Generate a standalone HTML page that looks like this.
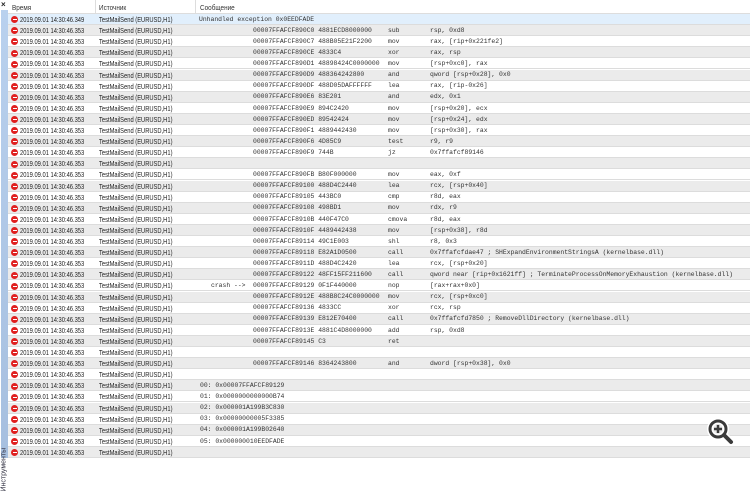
<!DOCTYPE html>
<html><head><meta charset="utf-8"><style>
*{margin:0;padding:0;box-sizing:border-box}
body{width:750px;height:458px;overflow:hidden;background:#fff;position:relative;font-family:"Liberation Sans","Noto Sans CJK SC",sans-serif;font-size:8px;color:#222}
.strip{position:absolute;left:1px;top:10px;width:7px;height:448px;background:linear-gradient(#b9d1ee,#a6bfdf);}
.x{position:absolute;left:1px;top:0;font-size:8px;font-weight:bold;line-height:9px}
.vt{position:absolute;left:0;top:418px;width:8px;height:60px;overflow:visible}
.vt span{position:absolute;left:-26px;top:40px;width:60px;transform:rotate(-90deg);font-size:7px;color:#334;white-space:nowrap;text-align:left}
.hdr{position:absolute;left:8px;top:0;width:742px;height:14px;border-bottom:1px solid #ddd;background:#fff}
.hdr div{position:absolute;top:3px;font-size:7.5px;color:#333;transform:scaleX(.85);transform-origin:left}
.sep{position:absolute;top:0;width:1px;height:14px;background:#ddd}
.row{position:absolute;left:8px;width:742px;height:11.1px;border-bottom:1px solid #dcdcdc;white-space:nowrap}
.g{background:#ebebeb}.w{background:#fff}.s{background:#e1effc}
.row .m{position:absolute;left:188px;top:0;width:554px;height:100%;background:inherit}
.row.g .m{background:#ebebeb}.row.w .m{background:#fff}
.ic{position:absolute;left:3px;top:2.3px;width:7px;height:7px;border-radius:50%;background:#e02020}
.ic:after{content:"";position:absolute;left:1.5px;top:3px;width:4px;height:1px;background:#fff}
.t,.src{position:absolute;top:1px;font-size:7.5px;transform:scaleX(.77);transform-origin:left}
.t{left:12px}.src{left:91px}
.mo{position:absolute;top:1.8px;font-family:"Liberation Mono",monospace;font-size:6.4px;color:#333}
</style></head><body>
<div class="x">×</div>
<div class="strip"></div>
<div class="vt"><span>Инструменты</span></div>
<div class="hdr"><div style="left:4px">Время</div><div style="left:91px">Источник</div><div style="left:192px">Сообщение</div>
<span class="sep" style="left:87px"></span><span class="sep" style="left:187px"></span></div>
<div id="rows">
<div class="row s" style="top:14.0px"><i class="ic"></i><span class="t">2019.09.01 14:30:46.349</span><span class="src">TestMailSend (EURUSD,H1)</span><span class="mo" style="left:191px">Unhandled exception 0x0EEDFADE</span></div>
<div class="row g" style="top:25.1px"><div class="m"></div><i class="ic"></i><span class="t">2019.09.01 14:30:46.353</span><span class="src">TestMailSend (EURUSD,H1)</span><span class="mo" style="left:245px">00007FFAFCF890C0 4881ECD8000000</span><span class="mo" style="left:380px">sub</span><span class="mo" style="left:422px">rsp, 0xd8</span></div>
<div class="row w" style="top:36.2px"><div class="m"></div><i class="ic"></i><span class="t">2019.09.01 14:30:46.353</span><span class="src">TestMailSend (EURUSD,H1)</span><span class="mo" style="left:245px">00007FFAFCF890C7 488B05E21F2200</span><span class="mo" style="left:380px">mov</span><span class="mo" style="left:422px">rax, [rip+0x221fe2]</span></div>
<div class="row g" style="top:47.3px"><div class="m"></div><i class="ic"></i><span class="t">2019.09.01 14:30:46.353</span><span class="src">TestMailSend (EURUSD,H1)</span><span class="mo" style="left:245px">00007FFAFCF890CE 4833C4</span><span class="mo" style="left:380px">xor</span><span class="mo" style="left:422px">rax, rsp</span></div>
<div class="row w" style="top:58.4px"><div class="m"></div><i class="ic"></i><span class="t">2019.09.01 14:30:46.353</span><span class="src">TestMailSend (EURUSD,H1)</span><span class="mo" style="left:245px">00007FFAFCF890D1 48898424C0000000</span><span class="mo" style="left:380px">mov</span><span class="mo" style="left:422px">[rsp+0xc0], rax</span></div>
<div class="row g" style="top:69.5px"><div class="m"></div><i class="ic"></i><span class="t">2019.09.01 14:30:46.353</span><span class="src">TestMailSend (EURUSD,H1)</span><span class="mo" style="left:245px">00007FFAFCF890D9 488364242800</span><span class="mo" style="left:380px">and</span><span class="mo" style="left:422px">qword [rsp+0x28], 0x0</span></div>
<div class="row w" style="top:80.6px"><div class="m"></div><i class="ic"></i><span class="t">2019.09.01 14:30:46.353</span><span class="src">TestMailSend (EURUSD,H1)</span><span class="mo" style="left:245px">00007FFAFCF890DF 488D05DAFFFFFF</span><span class="mo" style="left:380px">lea</span><span class="mo" style="left:422px">rax, [rip-0x26]</span></div>
<div class="row g" style="top:91.7px"><div class="m"></div><i class="ic"></i><span class="t">2019.09.01 14:30:46.353</span><span class="src">TestMailSend (EURUSD,H1)</span><span class="mo" style="left:245px">00007FFAFCF890E6 83E201</span><span class="mo" style="left:380px">and</span><span class="mo" style="left:422px">edx, 0x1</span></div>
<div class="row w" style="top:102.8px"><div class="m"></div><i class="ic"></i><span class="t">2019.09.01 14:30:46.353</span><span class="src">TestMailSend (EURUSD,H1)</span><span class="mo" style="left:245px">00007FFAFCF890E9 894C2420</span><span class="mo" style="left:380px">mov</span><span class="mo" style="left:422px">[rsp+0x20], ecx</span></div>
<div class="row g" style="top:113.9px"><div class="m"></div><i class="ic"></i><span class="t">2019.09.01 14:30:46.353</span><span class="src">TestMailSend (EURUSD,H1)</span><span class="mo" style="left:245px">00007FFAFCF890ED 89542424</span><span class="mo" style="left:380px">mov</span><span class="mo" style="left:422px">[rsp+0x24], edx</span></div>
<div class="row w" style="top:125.0px"><div class="m"></div><i class="ic"></i><span class="t">2019.09.01 14:30:46.353</span><span class="src">TestMailSend (EURUSD,H1)</span><span class="mo" style="left:245px">00007FFAFCF890F1 4889442430</span><span class="mo" style="left:380px">mov</span><span class="mo" style="left:422px">[rsp+0x30], rax</span></div>
<div class="row g" style="top:136.1px"><div class="m"></div><i class="ic"></i><span class="t">2019.09.01 14:30:46.353</span><span class="src">TestMailSend (EURUSD,H1)</span><span class="mo" style="left:245px">00007FFAFCF890F6 4D85C9</span><span class="mo" style="left:380px">test</span><span class="mo" style="left:422px">r9, r9</span></div>
<div class="row w" style="top:147.2px"><div class="m"></div><i class="ic"></i><span class="t">2019.09.01 14:30:46.353</span><span class="src">TestMailSend (EURUSD,H1)</span><span class="mo" style="left:245px">00007FFAFCF890F9 744B</span><span class="mo" style="left:380px">jz</span><span class="mo" style="left:422px">0x7ffafcf89146</span></div>
<div class="row g" style="top:158.3px"><div class="m"></div><i class="ic"></i><span class="t">2019.09.01 14:30:46.353</span><span class="src">TestMailSend (EURUSD,H1)</span></div>
<div class="row w" style="top:169.4px"><div class="m"></div><i class="ic"></i><span class="t">2019.09.01 14:30:46.353</span><span class="src">TestMailSend (EURUSD,H1)</span><span class="mo" style="left:245px">00007FFAFCF890FB B80F000000</span><span class="mo" style="left:380px">mov</span><span class="mo" style="left:422px">eax, 0xf</span></div>
<div class="row g" style="top:180.5px"><div class="m"></div><i class="ic"></i><span class="t">2019.09.01 14:30:46.353</span><span class="src">TestMailSend (EURUSD,H1)</span><span class="mo" style="left:245px">00007FFAFCF89100 488D4C2440</span><span class="mo" style="left:380px">lea</span><span class="mo" style="left:422px">rcx, [rsp+0x40]</span></div>
<div class="row w" style="top:191.6px"><div class="m"></div><i class="ic"></i><span class="t">2019.09.01 14:30:46.353</span><span class="src">TestMailSend (EURUSD,H1)</span><span class="mo" style="left:245px">00007FFAFCF89105 443BC0</span><span class="mo" style="left:380px">cmp</span><span class="mo" style="left:422px">r8d, eax</span></div>
<div class="row g" style="top:202.7px"><div class="m"></div><i class="ic"></i><span class="t">2019.09.01 14:30:46.353</span><span class="src">TestMailSend (EURUSD,H1)</span><span class="mo" style="left:245px">00007FFAFCF89108 498BD1</span><span class="mo" style="left:380px">mov</span><span class="mo" style="left:422px">rdx, r9</span></div>
<div class="row w" style="top:213.8px"><div class="m"></div><i class="ic"></i><span class="t">2019.09.01 14:30:46.353</span><span class="src">TestMailSend (EURUSD,H1)</span><span class="mo" style="left:245px">00007FFAFCF8910B 440F47C0</span><span class="mo" style="left:380px">cmova</span><span class="mo" style="left:422px">r8d, eax</span></div>
<div class="row g" style="top:224.9px"><div class="m"></div><i class="ic"></i><span class="t">2019.09.01 14:30:46.353</span><span class="src">TestMailSend (EURUSD,H1)</span><span class="mo" style="left:245px">00007FFAFCF8910F 4489442438</span><span class="mo" style="left:380px">mov</span><span class="mo" style="left:422px">[rsp+0x38], r8d</span></div>
<div class="row w" style="top:236.0px"><div class="m"></div><i class="ic"></i><span class="t">2019.09.01 14:30:46.353</span><span class="src">TestMailSend (EURUSD,H1)</span><span class="mo" style="left:245px">00007FFAFCF89114 49C1E003</span><span class="mo" style="left:380px">shl</span><span class="mo" style="left:422px">r8, 0x3</span></div>
<div class="row g" style="top:247.1px"><div class="m"></div><i class="ic"></i><span class="t">2019.09.01 14:30:46.353</span><span class="src">TestMailSend (EURUSD,H1)</span><span class="mo" style="left:245px">00007FFAFCF89118 E82A1D0500</span><span class="mo" style="left:380px">call</span><span class="mo" style="left:422px">0x7ffafcfdae47  ; SHExpandEnvironmentStringsA (kernelbase.dll)</span></div>
<div class="row w" style="top:258.2px"><div class="m"></div><i class="ic"></i><span class="t">2019.09.01 14:30:46.353</span><span class="src">TestMailSend (EURUSD,H1)</span><span class="mo" style="left:245px">00007FFAFCF8911D 488D4C2420</span><span class="mo" style="left:380px">lea</span><span class="mo" style="left:422px">rcx, [rsp+0x20]</span></div>
<div class="row g" style="top:269.3px"><div class="m"></div><i class="ic"></i><span class="t">2019.09.01 14:30:46.353</span><span class="src">TestMailSend (EURUSD,H1)</span><span class="mo" style="left:245px">00007FFAFCF89122 48FF15FF211600</span><span class="mo" style="left:380px">call</span><span class="mo" style="left:422px">qword near [rip+0x1621ff]  ; TerminateProcessOnMemoryExhaustion (kernelbase.dll)</span></div>
<div class="row w" style="top:280.4px"><div class="m"></div><i class="ic"></i><span class="t">2019.09.01 14:30:46.353</span><span class="src">TestMailSend (EURUSD,H1)</span><span class="mo" style="left:203px">crash --&gt;</span><span class="mo" style="left:245px">00007FFAFCF89129 0F1F440000</span><span class="mo" style="left:380px">nop</span><span class="mo" style="left:422px">[rax+rax+0x0]</span></div>
<div class="row g" style="top:291.5px"><div class="m"></div><i class="ic"></i><span class="t">2019.09.01 14:30:46.353</span><span class="src">TestMailSend (EURUSD,H1)</span><span class="mo" style="left:245px">00007FFAFCF8912E 488B8C24C0000000</span><span class="mo" style="left:380px">mov</span><span class="mo" style="left:422px">rcx, [rsp+0xc0]</span></div>
<div class="row w" style="top:302.6px"><div class="m"></div><i class="ic"></i><span class="t">2019.09.01 14:30:46.353</span><span class="src">TestMailSend (EURUSD,H1)</span><span class="mo" style="left:245px">00007FFAFCF89136 4833CC</span><span class="mo" style="left:380px">xor</span><span class="mo" style="left:422px">rcx, rsp</span></div>
<div class="row g" style="top:313.7px"><div class="m"></div><i class="ic"></i><span class="t">2019.09.01 14:30:46.353</span><span class="src">TestMailSend (EURUSD,H1)</span><span class="mo" style="left:245px">00007FFAFCF89139 E812E70400</span><span class="mo" style="left:380px">call</span><span class="mo" style="left:422px">0x7ffafcfd7850  ; RemoveDllDirectory (kernelbase.dll)</span></div>
<div class="row w" style="top:324.8px"><div class="m"></div><i class="ic"></i><span class="t">2019.09.01 14:30:46.353</span><span class="src">TestMailSend (EURUSD,H1)</span><span class="mo" style="left:245px">00007FFAFCF8913E 4881C4D8000000</span><span class="mo" style="left:380px">add</span><span class="mo" style="left:422px">rsp, 0xd8</span></div>
<div class="row g" style="top:335.9px"><div class="m"></div><i class="ic"></i><span class="t">2019.09.01 14:30:46.353</span><span class="src">TestMailSend (EURUSD,H1)</span><span class="mo" style="left:245px">00007FFAFCF89145 C3</span><span class="mo" style="left:380px">ret</span></div>
<div class="row w" style="top:347.0px"><div class="m"></div><i class="ic"></i><span class="t">2019.09.01 14:30:46.353</span><span class="src">TestMailSend (EURUSD,H1)</span></div>
<div class="row g" style="top:358.1px"><div class="m"></div><i class="ic"></i><span class="t">2019.09.01 14:30:46.353</span><span class="src">TestMailSend (EURUSD,H1)</span><span class="mo" style="left:245px">00007FFAFCF89146 8364243800</span><span class="mo" style="left:380px">and</span><span class="mo" style="left:422px">dword [rsp+0x38], 0x0</span></div>
<div class="row w" style="top:369.2px"><div class="m"></div><i class="ic"></i><span class="t">2019.09.01 14:30:46.353</span><span class="src">TestMailSend (EURUSD,H1)</span></div>
<div class="row g" style="top:380.3px"><div class="m"></div><i class="ic"></i><span class="t">2019.09.01 14:30:46.353</span><span class="src">TestMailSend (EURUSD,H1)</span><span class="mo" style="left:192px">00: 0x00007FFAFCF89129</span></div>
<div class="row w" style="top:391.4px"><div class="m"></div><i class="ic"></i><span class="t">2019.09.01 14:30:46.353</span><span class="src">TestMailSend (EURUSD,H1)</span><span class="mo" style="left:192px">01: 0x0000000000000B74</span></div>
<div class="row g" style="top:402.5px"><div class="m"></div><i class="ic"></i><span class="t">2019.09.01 14:30:46.353</span><span class="src">TestMailSend (EURUSD,H1)</span><span class="mo" style="left:192px">02: 0x000001A199B3C830</span></div>
<div class="row w" style="top:413.6px"><div class="m"></div><i class="ic"></i><span class="t">2019.09.01 14:30:46.353</span><span class="src">TestMailSend (EURUSD,H1)</span><span class="mo" style="left:192px">03: 0x00000000005F3385</span></div>
<div class="row g" style="top:424.7px"><div class="m"></div><i class="ic"></i><span class="t">2019.09.01 14:30:46.353</span><span class="src">TestMailSend (EURUSD,H1)</span><span class="mo" style="left:192px">04: 0x000001A199B02640</span></div>
<div class="row w" style="top:435.8px"><div class="m"></div><i class="ic"></i><span class="t">2019.09.01 14:30:46.353</span><span class="src">TestMailSend (EURUSD,H1)</span><span class="mo" style="left:192px">05: 0x000000010EEDFADE</span></div>
<div class="row g" style="top:446.9px"><div class="m"></div><i class="ic"></i><span class="t">2019.09.01 14:30:46.353</span><span class="src">TestMailSend (EURUSD,H1)</span></div>
</div>
<svg style="position:absolute;left:706px;top:418px" width="32" height="30" viewBox="0 0 32 30">
<circle cx="12" cy="11" r="8" fill="none" stroke="#fff" stroke-width="6"/>
<line x1="18" y1="17" x2="25" y2="24" stroke="#fff" stroke-width="7" stroke-linecap="round"/>
<circle cx="12" cy="11" r="8" fill="none" stroke="#3a3a3a" stroke-width="3"/>
<line x1="18" y1="17" x2="25" y2="24" stroke="#3a3a3a" stroke-width="4" stroke-linecap="round"/>
<path d="M12 7v8M8 11h8" stroke="#3a3a3a" stroke-width="2.5"/>
</svg>
</body></html>
